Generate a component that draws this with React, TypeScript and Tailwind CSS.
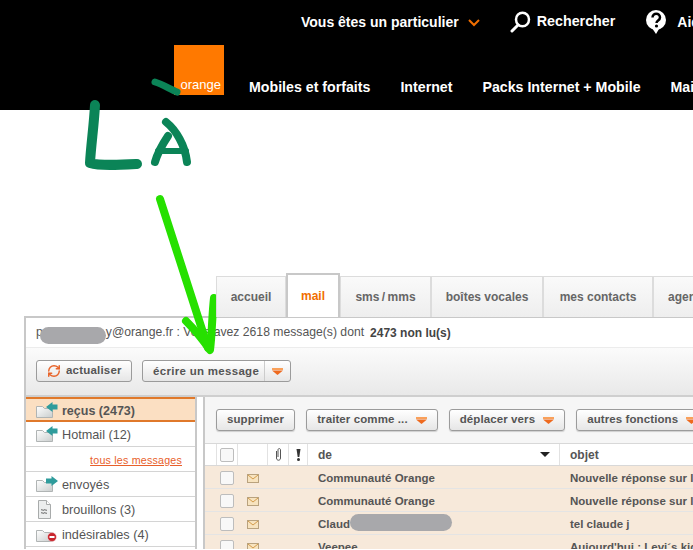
import type { ReactNode } from 'react';
import { RefreshCw } from 'lucide-react';

const sans = "font-['Liberation_Sans',Arial,sans-serif]";

function Caret() {
  return (
    <svg width="11" height="7" viewBox="0 0 11 7" className="shrink-0">
      <rect x="0" y="0" width="11" height="2" fill="#f9a05a" />
      <path d="M0 2.500h11L5.500 7z" fill="#ee6a1f" />
    </svg>
  );
}

function Folder({ kind }: { kind: 'in' | 'out' | 'spam' }) {
  return (
    <svg width="22" height="16" viewBox="0 0 22 16" className="shrink-0">
      <defs>
        <linearGradient id="fold" x1="0" y1="0" x2="1" y2="1">
          <stop offset="0" stopColor="#ffffff" />
          <stop offset="1" stopColor="#c9cdcd" />
        </linearGradient>
      </defs>
      <path d="M0.500 4.500h6l2 2h8v9h-16z" fill="url(#fold)" stroke="#b0b4b4" />
      {kind === 'in' && <path d="M21.500 2.500h-5V0l-6.500 5 6.500 5V7.500h5z" fill="#2f9c9c" />}
      {kind === 'out' && <path d="M10 2.500h5.500V0L22 5l-6.500 5V7.500H10z" fill="#2f9c9c" />}
      {kind === 'spam' && (
        <>
          <circle cx="16" cy="11" r="4.500" fill="#c9252d" stroke="#fff" strokeWidth="0.500" />
          <rect x="13.500" y="10" width="5" height="2" fill="#fff" />
        </>
      )}
    </svg>
  );
}

function Draft() {
  return (
    <svg width="22" height="19" viewBox="0 0 22 19" className="shrink-0">
      <path d="M2.500 0.500h8l4 4v14h-12z" fill="#eceeee" stroke="#a8abab" />
      <path d="M10.500 0.500v4h4" fill="#fff" stroke="#a8abab" />
      <path d="M5 10c1-1 2 1 3 0s2 1 3 0M5 13c1-1 2 1 3 0s2 1 3 0" fill="none" stroke="#555" />
    </svg>
  );
}

function Mail() {
  return (
    <svg width="12" height="9" viewBox="0 0 12 9">
      <rect x="0.500" y="0.500" width="11" height="8" fill="#f7e3bf" stroke="#b9a27e" />
      <path d="M1 1l5 4 5-4" fill="none" stroke="#d39a4a" />
    </svg>
  );
}

function Check() {
  return <span className="block w-[14px] h-[14px] rounded-[2px] border border-[#bdbdbd] bg-[#f8f8f8]" />;
}

function ToolButton({ label, caret }: { label: string; caret?: boolean }) {
  return (
    <div className="h-[22px] flex items-center gap-[8px] px-[10px] rounded-[3px] border border-[#9b9b9b] bg-gradient-to-b from-[#ffffff] to-[#e6e6e6] shadow-[0_1px_1px_#cfcfcf] shrink-0 text-[11.500px] font-bold tracking-[0.1px] text-[#555]">
      {label}
      {caret && <Caret />}
    </div>
  );
}

function FolderRow({ label, icon, active }: { label: string; icon: ReactNode; active?: boolean }) {
  return (
    <div className={`h-[25px] flex items-center gap-[4px] pl-[10px] whitespace-nowrap ${active ? 'bg-[#fbdfc2] border-t-2 border-b-2 border-[#e0792b] font-bold text-[12.500px]' : 'border-b border-[#d4d4d4]'}`}>
      {icon}
      <span className="pt-[4px]">{label}</span>
    </div>
  );
}

const folders = [
  { label: 'reçus (2473)', icon: <Folder kind="in" />, active: true },
  { label: 'Hotmail (12)', icon: <Folder kind="in" /> },
  { label: 'envoyés', icon: <Folder kind="out" /> },
  { label: 'brouillons (3)', icon: <Draft /> },
  { label: 'indésirables (4)', icon: <Folder kind="spam" /> },
];

const rows = [
  { from: 'Communauté Orange', subject: 'Nouvelle réponse sur le' },
  { from: 'Communauté Orange', subject: 'Nouvelle réponse sur le' },
  { from: 'Claud', subject: 'tel claude j' },
  { from: 'Veepee', subject: "Aujourd'hui : Levi´s kids" },
];

const tabs = [
  { label: 'accueil', w: 'w-[70px]' },
  { label: 'mail', w: 'w-[54px]', active: true },
  { label: 'sms\u2009/\u2009mms', w: 'w-[91px]' },
  { label: 'boîtes vocales', w: 'w-[112px]' },
  { label: 'mes contacts', w: 'w-[110px]' },
  { label: 'agenda', w: 'w-[72px]' },
];

export default function App() {
  return (
    <div className={`relative w-[693px] h-[550px] overflow-hidden bg-white ${sans}`}>
      <header className="h-[110px] bg-black text-white font-bold text-[14px] overflow-hidden">
        <div className="flex items-center h-[44px] pl-[301px] whitespace-nowrap">
          <span>Vous êtes un particulier</span>
          <svg width="12" height="8" viewBox="0 0 12 8" className="ml-[9px] mt-[2px] shrink-0">
            <path d="M1 1l5 5 5-5" fill="none" stroke="#f16e00" strokeWidth="2" />
          </svg>
          <svg width="21" height="22" viewBox="0 0 21 22" className="ml-[30px] shrink-0">
            <ellipse cx="12.500" cy="8.500" rx="6.500" ry="6.800" fill="none" stroke="#fff" strokeWidth="2.500" />
            <path d="M8 14l-6 6" stroke="#fff" strokeWidth="3" strokeLinecap="round" />
          </svg>
          <span className="ml-[6px] text-[14.300px]">Rechercher</span>
          <svg width="22" height="24" viewBox="0 0 22 24" className="ml-[30px] shrink-0">
            <circle cx="11" cy="10" r="10" fill="#fff" />
            <path d="M7 18l4 6 3-5z" fill="#fff" />
            <path d="M7.500 7.500c0-5 7.500-5 7.500 0 0 3-3.500 3-3.500 5.500" fill="none" stroke="#000" strokeWidth="2.500" />
            <circle cx="11.500" cy="16" r="1.600" fill="#000" />
          </svg>
          <span className="ml-[10px]">Aide</span>
        </div>
        <div className="flex items-start pl-[174px] whitespace-nowrap">
          <div className="mt-[1px] w-[50px] h-[50px] bg-[#ff7900] flex items-end justify-end pr-[3px] pb-[1px] text-[13px] font-normal shrink-0">orange</div>
          <div className="flex gap-[30px] pl-[25px] mt-[33px] text-[14.200px]">
            <span>Mobiles et forfaits</span>
            <span>Internet</span>
            <span>Packs Internet + Mobile</span>
            <span>Maison</span>
          </div>
        </div>
      </header>

      <main className="pl-[24px] pt-[163px]">
        <nav className="flex pl-[192px] h-[44px] items-end relative z-10 -mb-[1px] whitespace-nowrap">
          {tabs.map((t) =>
            t.active ? (
              <div key={t.label} className={`${t.w} shrink-0 h-[44px] bg-white border-2 border-b-0 border-[#c8c8c8] flex items-center justify-center text-[12px] font-bold text-[#f16e00]`}>
                {t.label}
              </div>
            ) : (
              <div key={t.label} className={`${t.w} shrink-0 h-[41px] bg-gradient-to-b from-[#fafafa] to-[#eeeeee] border border-[#dcdcdc] border-b-0 flex items-center justify-center text-[12px] font-bold text-[#666]`}>
                {t.label}
              </div>
            ),
          )}
        </nav>

        <section className="border-l-2 border-t-2 border-[#c8c8c8] w-[669px] h-[233px] overflow-hidden">
          <div className="h-[30px] flex items-center pl-[10px] text-[12.200px] text-[#555] border-b border-[#ececec] whitespace-nowrap">
            p<span className="w-[63px]" />y@orange.fr : Vous avez 2618 message(s) dont
            <b className="ml-[6px] text-[12px] text-[#444]">2473 non lu(s)</b>
          </div>
          <div className="h-[49px] flex items-center gap-[10px] pl-[10px] pb-[1px] border-b-2 border-[#cfcfcf] bg-gradient-to-b from-[#fbfbfb] to-[#e9e9e9]">
            <div className="h-[22px] w-[96px] flex items-center gap-[5px] pl-[10px] rounded-[3px] border border-[#9b9b9b] bg-gradient-to-b from-white to-[#e6e6e6] text-[11.500px] font-bold tracking-[0.2px] text-[#555]">
              <RefreshCw size={14} strokeWidth={2.5} color="#e8642a" />
              actualiser
            </div>
            <div className="h-[22px] w-[149px] flex items-center rounded-[3px] border border-[#9b9b9b] bg-gradient-to-b from-white to-[#e6e6e6] text-[11.500px] font-bold tracking-[0.3px] text-[#555]">
              <span className="w-[122px] pl-[10px] border-r border-[#ccc] h-full leading-[20px] whitespace-nowrap">écrire un message</span>
              <span className="flex-1 flex justify-center"><Caret /></span>
            </div>
          </div>

          <div className="flex">
            <aside className="w-[171px] shrink-0 border-r-2 border-[#c8c8c8] text-[#555] text-[12.700px]">
              {folders.slice(0, 2).map((f) => <FolderRow key={f.label} {...f} />)}
              <div className="h-[25px] flex items-center justify-end pr-[13px] pt-[2px] border-b border-[#d4d4d4] text-[10.700px] tracking-[0.2px] text-[#e8602a] underline">
                tous les messages
              </div>
              {folders.slice(2).map((f) => <FolderRow key={f.label} {...f} />)}
            </aside>

            <div className="ml-[6px] flex-1 min-w-0 border-l-2 border-[#c8c8c8] bg-[#f6f6f6]">
              <div className="h-[46px] flex items-center gap-[11px] pl-[11px] whitespace-nowrap">
                <ToolButton label="supprimer" />
                <ToolButton label="traiter comme ..." caret />
                <ToolButton label="déplacer vers" caret />
                <ToolButton label="autres fonctions" caret />
              </div>
              <div className="h-[23px] flex items-center bg-white border-t border-b border-[#d8d8d8] text-[12px] font-bold text-[#555] pl-[11px]">
                <span className="w-[22px] shrink-0 h-full flex items-center justify-center border-l border-r border-[#e2e2e2]"><Check /></span>
                <span className="w-[30px] shrink-0 h-full border-r border-[#e2e2e2]" />
                <span className="w-[21px] shrink-0 h-full border-r border-[#e2e2e2] flex items-center justify-center">
                  <svg width="7" height="13" viewBox="0 0 7 13">
                    <path d="M1.500 3v7c0 3 4 3 4 0V2C5.500 0 3 0 3 2v7" fill="none" stroke="#555" />
                  </svg>
                </span>
                <span className="w-[19px] shrink-0 h-full border-r border-[#e2e2e2] flex items-center justify-center">
                  <svg width="5" height="12" viewBox="0 0 5 12">
                    <path d="M0.500 0h4L3.300 8H1.700z" fill="#333" />
                    <circle cx="2.500" cy="10.500" r="1.500" fill="#333" />
                  </svg>
                </span>
                <span className="w-[252px] shrink-0 h-full border-r border-[#e2e2e2] flex items-center justify-between pl-[10px] pr-[9px]">
                  de
                  <svg width="10" height="5" viewBox="0 0 10 5"><path d="M0 0h10L5 5z" fill="#222" /></svg>
                </span>
                <span className="pl-[10px]">objet</span>
              </div>
              {rows.map((r, i) => (
                <div key={i} className="h-[23px] flex items-center pl-[11px] pt-[2px] bg-[#f7e9da] border-b border-[#e4e4e4] text-[11.500px] font-bold text-[#555] whitespace-nowrap">
                  <span className="w-[22px] shrink-0 flex justify-center"><Check /></span>
                  <span className="w-[30px] shrink-0 flex justify-center"><Mail /></span>
                  <span className="w-[40px] shrink-0" />
                  <span className="w-[252px] shrink-0 pl-[10px] pt-[2px]">{r.from}</span>
                  <span className="pl-[10px] pt-[2px]">{r.subject}</span>
                </div>
              ))}
            </div>
          </div>
        </section>
      </main>

      {/* hand drawn notes and masked out names on top of the capture */}
      <span className="absolute left-[40px] top-[327px] w-[66px] h-[17px] rounded-full bg-[#a8a8ab]" />
      <span className="absolute left-[350px] top-[514px] w-[102px] h-[17px] rounded-full bg-[#a8a8ab]" />
      <svg className="absolute left-0 top-0 pointer-events-none" width="693" height="550" viewBox="0 0 693 550">
        <g fill="none" stroke="#0b8457" strokeLinecap="round" strokeLinejoin="round">
          <path d="M95 105C94 125 91 145 90 163C100 166 118 165 137 164" strokeWidth="10" />
          <path d="M155 82C162 84 170 89 177 92" strokeWidth="7" />
          <path d="M166 122C176 130 185 145 187 162" strokeWidth="8" />
          <path d="M168 136C162 145 157 155 155 162" strokeWidth="8" />
          <path d="M158 151H186" strokeWidth="6" />
        </g>
        <g fill="none" stroke="#26e000" strokeLinecap="round" strokeLinejoin="round" strokeWidth="8">
          <path d="M160 199L208 348" />
          <path d="M186 321C195 330 203 340 210 350C212 335 212 315 214 298" />
        </g>
      </svg>
    </div>
  );
}
